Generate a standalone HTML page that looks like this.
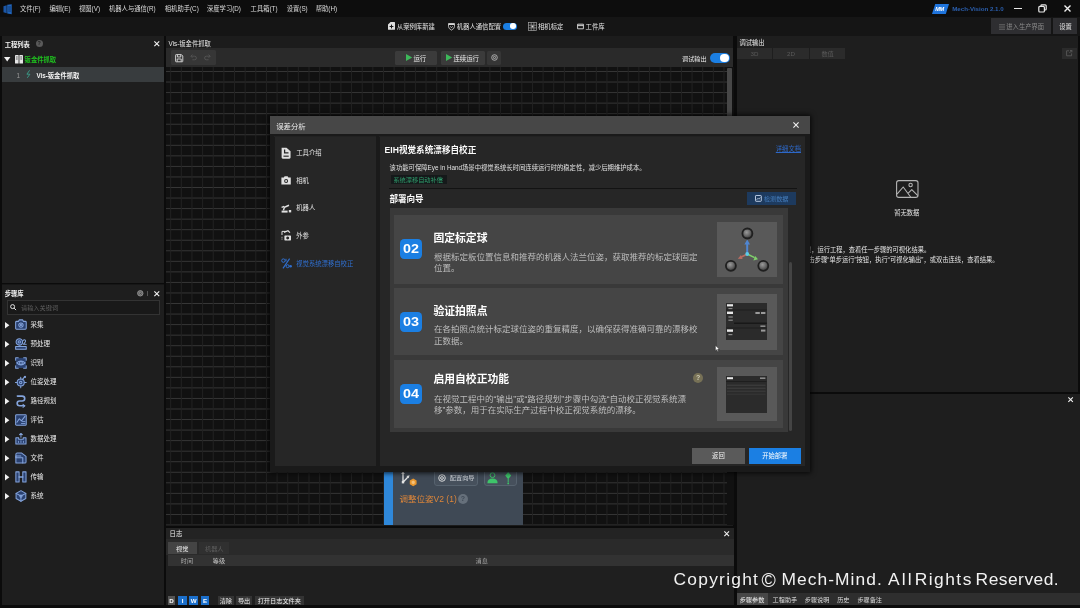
<!DOCTYPE html>
<html lang="zh-CN">
<head>
<meta charset="utf-8">
<title>Mech-Vision</title>
<style>
*{box-sizing:border-box;margin:0;padding:0}
html,body{width:1080px;height:608px;overflow:hidden;background:#0b0b0b}
body{position:relative;will-change:transform;font-family:"Liberation Sans","Noto Sans CJK SC",sans-serif;font-size:6.4px;color:#e6e6e6;line-height:1}
.abs{position:absolute}
.t{position:absolute;white-space:nowrap;line-height:10px;height:10px;margin-top:-4.4px}
.b{font-weight:bold}
svg{position:absolute;overflow:visible}
/* top bars */
#menubar{left:0;top:0;width:1080px;height:17px;background:#0d0d0d}
#toolbar{left:0;top:17px;width:1080px;height:19px;background:#151515}
/* panels */
.panel{background:#1e1e1e}
#pl1{left:2px;top:36px;width:162.4px;height:246.6px}
#pl2{left:2px;top:285px;width:162.4px;height:320px;box-shadow:0 -.6px 0 #1e1e1e}
#pc{left:166px;top:36px;width:567px;height:490px;background:#1c1c1c}
#pctool{left:0;top:12px;width:567px;height:19px;background:#2a2a2a}
#canvas{left:0;top:31px;width:560.6px;height:458px;background-color:#111;
 background-image:linear-gradient(to right,#212121 0,#212121 1px,transparent 1px),linear-gradient(to bottom,#363636 0,#363636 1px,transparent 1px);
 background-size:10.65px 10.55px;background-position:4.2px 4px}
#vscroll{left:560.6px;top:31px;width:7px;height:458px;background:#111}
#vscroll i{position:absolute;left:.9px;top:1.2px;width:4.3px;height:240px;background:#474747;border-radius:1px}
#plog{left:166px;top:527.5px;width:567.6px;height:77.5px;background:linear-gradient(to bottom,#232323 0,#232323 10.5px,#2a2a2a 10.5px,#2a2a2a 27px,#1f1f1f 27px)}
#pr1{left:736.6px;top:35.6px;width:341.2px;height:356.3px}
#pr2{left:736.6px;top:393.6px;width:343.4px;height:211.8px}
/* dialog */
#dlg{left:270px;top:116px;width:540px;height:355.5px;background:#1a1a1a;box-shadow:0 0 5px 1px rgba(0,0,0,.8)}
#dlgtitle{left:0;top:0;width:540px;height:17.8px;background:#474747}
#side{left:4px;top:21px;width:101.8px;height:329px;background:linear-gradient(to right,#1a1a1a 1px,#262626 1px);box-shadow:0 -.8px 0 #252525}
#main{left:109px;top:21px;width:426.2px;height:329.2px;background:linear-gradient(to right,#1a1a1a .8px,#262626 .8px);box-shadow:0 -.8px 0 #252525}
.card{position:absolute;left:3.7px;width:389px;background:#454545}
.badge{position:absolute;left:6px;width:22.2px;height:20.4px;border-radius:4.2px;background:#1b7fe3;color:#fff;font-weight:bold;font-size:12.6px;line-height:20.6px;text-align:center}
.badge b{display:inline-block;transform:scaleX(1.14)}
.ct{position:absolute;left:39.6px;font-size:10.8px;margin-top:.3px;font-weight:bold;color:#fff;line-height:14px;white-space:nowrap}
.cd{position:absolute;left:40px;font-size:8.5px;color:#bdbdbd;line-height:11.1px;white-space:nowrap;margin-top:1.1px}
.thumb{position:absolute;left:323px;width:60px;height:55px;background:#595959}
.btn{position:absolute;text-align:center;white-space:nowrap}
.m{top:8.8px;font-size:6.3px;color:#dcdcdc}
.tb{top:9.5px;font-size:6.35px;color:#e4e4e4}
.tog{border-radius:4px;background:#1b7fe3}
.tog i{position:absolute;border-radius:50%;background:#fff}
.q{border-radius:50%;font-size:5.4px;font-weight:bold;text-align:center;line-height:7px}
.lb{top:68.4px;height:9.2px;background:#1b6fcb;color:#fff;font-weight:bold;font-size:6.2px;line-height:9.2px;text-align:center}
.lg{top:68.4px;height:9.2px;background:#343434;color:#f0f0f0;font-size:6.2px;line-height:9.2px;text-align:center;white-space:nowrap}
.rt{top:12px;width:35.2px;height:11.6px;background:#2b2b2b;color:#5a5a5a;font-size:6.2px;line-height:11.6px;text-align:center}
.bt{top:205.4px;font-size:6.15px;color:#dcdcdc}
#wm{left:0;top:0;z-index:50}
.w{top:579.4px;font-size:17.4px;color:#f2f2f2;line-height:24px;height:24px;margin-top:-12px}
</style>
</head>
<body>
<div id="menubar" class="abs">
  <svg style="left:3.4px;top:3.8px" width="9.2" height="10.6" viewBox="0 0 10 11"><path d="M0.5 2.2 L4 1.2 V9.8 L0.5 8.8Z" fill="#1b56a6"/><path d="M4.6 0.6 L9.5 0 V10.8 L4.6 10.2Z" fill="#2065bd"/><path d="M5.6 3h3M5.6 5.2h3M5.6 7.4h3" stroke="#0d2a55" stroke-width=".8"/></svg>
  <span class="t m" style="left:20px">文件(F)</span>
  <span class="t m" style="left:49.5px">编辑(E)</span>
  <span class="t m" style="left:79px">视图(V)</span>
  <span class="t m" style="left:109px">机器人与通信(R)</span>
  <span class="t m" style="left:164.8px">相机助手(C)</span>
  <span class="t m" style="left:207px">深度学习(D)</span>
  <span class="t m" style="left:250.6px">工具箱(T)</span>
  <span class="t m" style="left:286.7px">设置(S)</span>
  <span class="t m" style="left:315.7px">帮助(H)</span>
  <svg style="left:932px;top:4px" width="17" height="10" viewBox="0 0 17 10"><path d="M3.2 0H17L13.8 10H0Z" fill="#1f74dc"/></svg>
  <span class="t b" style="left:935.2px;top:8.7px;font-size:5.6px;color:#fff;font-style:italic;letter-spacing:-.3px">MM</span>
  <span class="t b" style="left:952.2px;top:8.7px;font-size:6.15px;color:#2b5fae">Mech-Vision 2.1.0</span>
  <div class="abs" style="left:1013.5px;top:7.6px;width:8.5px;height:1.3px;background:#e8e8e8"></div>
  <svg style="left:1037.5px;top:4px" width="9" height="9" viewBox="0 0 9 9" fill="none" stroke="#e8e8e8" stroke-width="1.2"><rect x=".8" y="2.4" width="5.6" height="5.6" rx="1"/><path d="M3 2.2V1.6Q3 .8 3.8 .8H7.2Q8.2 .8 8.2 1.8V5Q8.2 6 7.2 6H6.6"/></svg>
  <svg style="left:1064px;top:5px" width="7" height="7" viewBox="0 0 7 7" stroke="#f0f0f0" stroke-width="1.4"><path d="M.5 .5L6.5 6.5M6.5 .5L.5 6.5"/></svg>
</div>
<div id="toolbar" class="abs">
  <svg style="left:388.2px;top:5.2px" width="7" height="7.8" viewBox="0 0 7 7.8"><path d="M2.6 0H6.4Q7 0 7 .6V7.2Q7 7.8 6.4 7.8H.6Q0 7.8 0 7.2V2.6Z" fill="#dedede"/><path d="M3.5 2.6V6.4M1.6 4.5H5.4" stroke="#151515" stroke-width="1"/></svg>
  <span class="t tb" style="left:396.8px">从案例库新建</span>
  <svg style="left:448.2px;top:5.6px" width="7" height="7.6" viewBox="0 0 7 7.6" fill="none" stroke="#d8d8d8" stroke-width=".8"><path d="M.5 .6H6.5V3.6Q6.5 5.6 3.5 7.1Q.5 5.6 .5 3.6Z"/><path d="M.5 1.2H6.5" stroke-width="1.6"/><path d="M2.2 3.2L3.5 4.8L4.8 3.2" stroke-width=".7"/></svg>
  <span class="t tb" style="left:456.7px">机器人通信配置</span>
  <div class="abs tog" style="left:503px;top:5.6px;width:14px;height:7.4px"><i style="left:7.4px;top:.9px;width:5.6px;height:5.6px"></i></div>
  <svg style="left:528.4px;top:4.8px" width="9" height="9" viewBox="0 0 9 9" fill="none" stroke="#a4a4a4" stroke-width=".7"><rect x=".4" y=".4" width="8.2" height="8.2"/><path d="M3.2 .4V8.6M5.9 .4V8.6M.4 3.2H8.6M.4 5.9H8.6"/><circle cx="4.5" cy="4.5" r="1" fill="#d8d8d8" stroke="none"/></svg>
  <span class="t tb" style="left:538px">相机标定</span>
  <svg style="left:577.3px;top:6px" width="7" height="7" viewBox="0 0 7 7" fill="none" stroke="#e0e0e0" stroke-width=".9"><path d="M.6 1.2H6.4V5.8H.6Z"/><path d="M.6 2.6H6.4"/></svg>
  <span class="t tb" style="left:585.6px">工件库</span>
  <div class="abs" style="left:991.4px;top:1.4px;width:60px;height:15.8px;background:#2e2e31"></div>
  <svg style="left:998.5px;top:6.5px" width="6" height="6" viewBox="0 0 6 6" stroke="#777" stroke-width=".8"><path d="M0 .8H6M0 3H6M0 5.2H6"/></svg>
  <span class="t" style="left:1006.3px;top:9.6px;font-size:6.3px;color:#8a8a8a">进入生产界面</span>
  <div class="abs" style="left:1053.2px;top:1.4px;width:24.2px;height:15.8px;background:#2e2e31"></div>
  <span class="t" style="left:1059.2px;top:9.6px;font-size:6.3px;color:#e8e8e8">设置</span>
</div>
<div id="pl1" class="abs panel">
  <span class="t b" style="left:2.8px;top:8px;font-size:6.25px;color:#f0f0f0">工程列表</span>
  <div class="abs q" style="left:33.7px;top:4px;width:7px;height:7px;background:#5a5a5a;color:#222">?</div>
  <svg style="left:151.6px;top:5.3px" width="5.6" height="5.6" viewBox="0 0 6 6" stroke="#f2f2f2" stroke-width="1.2"><path d="M.4 .4L5.6 5.6M5.6 .4L.4 5.6"/></svg>
  <svg style="left:2.2px;top:20.6px" width="6.4" height="4.4" viewBox="0 0 6.4 4.4"><path d="M0 0H6.4L3.2 4.4Z" fill="#f0f0f0"/></svg>
  <svg style="left:13px;top:18.5px" width="8" height="8.6" viewBox="0 0 8 8.6" fill="#e6e6e6"><rect x="0" y="0" width="3.6" height="8.6" rx=".4"/><rect x="4.4" y="0" width="3.6" height="8.6" rx=".4"/><path d="M.9 2H2.7M.9 4H2.7M5.3 2H7.1M5.3 4H7.1" stroke="#1e1e1e" stroke-width=".7"/></svg>
  <span class="t b" style="left:22.6px;top:23px;font-size:6.3px;color:#1fc11f">钣金件抓取</span>
  <div class="abs" style="left:0;top:30.6px;width:162px;height:15.2px;background:#383c3e"></div>
  <span class="t" style="left:14.6px;top:39.2px;font-size:6.3px;color:#9a9a9a">1</span>
  <svg style="left:23.6px;top:34.4px" width="5" height="8" viewBox="0 0 5 8" fill="none" stroke="#3aa08c" stroke-width=".9"><path d="M3.6 .3L.9 4.2H3.9L1.3 7.8"/></svg>
  <span class="t b" style="left:34.4px;top:39.4px;font-size:6.3px;color:#f2f2f2">Vis-钣金件抓取</span>
</div>
<div id="pl2" class="abs panel">
  <span class="t b" style="left:2.8px;top:8.3px;font-size:6.25px;color:#f0f0f0">步骤库</span>
  <svg style="left:134.6px;top:5px" width="6.6" height="6.6" viewBox="0 0 6.6 6.6" fill="#5c5c5c" stroke="#9a9a9a" stroke-width=".9"><circle cx="3.3" cy="3.3" r="2.7"/><circle cx="3.3" cy="3.3" r="1" fill="#1e1e1e"/></svg>
  <div class="abs" style="left:145.4px;top:6px;width:.8px;height:4.6px;background:#555"></div>
  <svg style="left:151.6px;top:5.5px" width="5.6" height="5.6" viewBox="0 0 6 6" stroke="#f2f2f2" stroke-width="1.2"><path d="M.4 .4L5.6 5.6M5.6 .4L.4 5.6"/></svg>
  <div class="abs" style="left:4.8px;top:15.4px;width:153.2px;height:14.2px;background:#191919;border:.8px solid #333"></div>
  <svg style="left:8.4px;top:19.2px" width="6.4" height="6.4" viewBox="0 0 6.4 6.4" fill="none" stroke="#e2e2e2" stroke-width="1"><circle cx="2.6" cy="2.6" r="2"/><path d="M4.1 4.1L6.1 6.1"/></svg>
  <span class="t" style="left:19px;top:22.6px;font-size:6.2px;color:#5e5e5e">请输入关键词</span>
  <svg style="left:2.6px;top:36.8px" width="4.4" height="6.4" viewBox="0 0 4.4 6.4"><path d="M0 0L4.4 3.2L0 6.4Z" fill="#f0f0f0"/></svg>
  <svg style="left:13.2px;top:33.9px" width="11.9" height="11.9" viewBox="0 0 11 11" fill="none" stroke="#84a4dc" stroke-width=".95" stroke-linejoin="round" stroke-linecap="round"><path d="M.6 3Q.6 2.2 1.4 2.2H3.2L4 .8H7L7.8 2.2H9.6Q10.4 2.2 10.4 3V8.6Q10.4 9.4 9.6 9.4H1.4Q.6 9.4 .6 8.6Z" fill="#2a4170"/><circle cx="5.5" cy="5.6" r="2"/><circle cx="5.5" cy="5.6" r=".6"/></svg>
  <span class="t" style="left:28.5px;top:39.6px;font-size:6.5px;color:#eaeaea">采集</span>
  <svg style="left:2.6px;top:55.8px" width="4.4" height="6.4" viewBox="0 0 4.4 6.4"><path d="M0 0L4.4 3.2L0 6.4Z" fill="#f0f0f0"/></svg>
  <svg style="left:13.2px;top:52.9px" width="11.9" height="11.9" viewBox="0 0 11 11" fill="none" stroke="#84a4dc" stroke-width=".95" stroke-linejoin="round" stroke-linecap="round"><circle cx="4" cy="3.6" r="3" fill="#2a4170"/><circle cx="4" cy="3.6" r="1.1"/><path d="M7.6 2.4Q8.2 1.4 9.2 1.8Q10.4 2.6 9.2 4L7.8 5.8H10.4"/><path d="M.6 7.8H10.4V10.4H.6Z" fill="#2a4170"/></svg>
  <span class="t" style="left:28.5px;top:58.6px;font-size:6.5px;color:#eaeaea">预处理</span>
  <svg style="left:2.6px;top:74.8px" width="4.4" height="6.4" viewBox="0 0 4.4 6.4"><path d="M0 0L4.4 3.2L0 6.4Z" fill="#f0f0f0"/></svg>
  <svg style="left:13.2px;top:72.0px" width="11.9" height="11.9" viewBox="0 0 11 11" fill="none" stroke="#84a4dc" stroke-width=".95" stroke-linejoin="round" stroke-linecap="round"><rect x=".8" y=".8" width="9.4" height="9.4" fill="#2a4170" stroke="none"/><path d="M.6 3V.6H3M8 .6H10.4V3M10.4 8V10.4H8M3 10.4H.6V8"/><path d="M1.6 5.5Q5.5 1.8 9.4 5.5Q5.5 9.2 1.6 5.5Z"/><circle cx="5.5" cy="5.5" r="1.3"/></svg>
  <span class="t" style="left:28.5px;top:77.6px;font-size:6.5px;color:#eaeaea">识别</span>
  <svg style="left:2.6px;top:93.8px" width="4.4" height="6.4" viewBox="0 0 4.4 6.4"><path d="M0 0L4.4 3.2L0 6.4Z" fill="#f0f0f0"/></svg>
  <svg style="left:13.2px;top:91.0px" width="11.9" height="11.9" viewBox="0 0 11 11" fill="none" stroke="#84a4dc" stroke-width=".95" stroke-linejoin="round" stroke-linecap="round"><circle cx="5.3" cy="6" r="3.3" fill="#2a4170"/><circle cx="5.3" cy="6" r="1.1"/><path d="M.4 6H2M8.6 6H10.4M5.3 9.3V10.8M5.3 1.2V2.7M6.8 3.4L9 .6"/><circle cx="9.2" cy=".9" r=".6"/></svg>
  <span class="t" style="left:28.5px;top:96.6px;font-size:6.5px;color:#eaeaea">位姿处理</span>
  <svg style="left:2.6px;top:112.8px" width="4.4" height="6.4" viewBox="0 0 4.4 6.4"><path d="M0 0L4.4 3.2L0 6.4Z" fill="#f0f0f0"/></svg>
  <svg style="left:13.2px;top:110.0px" width="11.9" height="11.9" viewBox="0 0 11 11" fill="none" stroke="#84a4dc" stroke-width=".95" stroke-linejoin="round" stroke-linecap="round"><path d="M2.2 1H6.6Q9 1 9 3.2Q9 5.5 6.6 5.5H4.2Q2 5.5 2 7.7Q2 10 4.2 10H8.8" stroke-width="1.5"/><path d="M7.4 8.6L9 10L7.4 11.4"/></svg>
  <span class="t" style="left:28.5px;top:115.6px;font-size:6.5px;color:#eaeaea">路径规划</span>
  <svg style="left:2.6px;top:131.8px" width="4.4" height="6.4" viewBox="0 0 4.4 6.4"><path d="M0 0L4.4 3.2L0 6.4Z" fill="#f0f0f0"/></svg>
  <svg style="left:13.2px;top:129.0px" width="11.9" height="11.9" viewBox="0 0 11 11" fill="none" stroke="#84a4dc" stroke-width=".95" stroke-linejoin="round" stroke-linecap="round"><rect x=".6" y=".6" width="9.8" height="9.8" rx=".8" fill="#2a4170"/><path d="M1.8 7.6L4 4.4L6 6.4L9.2 2.2"/><path d="M6 8.8H9.2M6.8 7H9.2" stroke-width=".8"/></svg>
  <span class="t" style="left:28.5px;top:134.6px;font-size:6.5px;color:#eaeaea">评估</span>
  <svg style="left:2.6px;top:150.8px" width="4.4" height="6.4" viewBox="0 0 4.4 6.4"><path d="M0 0L4.4 3.2L0 6.4Z" fill="#f0f0f0"/></svg>
  <svg style="left:13.2px;top:148.0px" width="11.9" height="11.9" viewBox="0 0 11 11" fill="none" stroke="#84a4dc" stroke-width=".95" stroke-linejoin="round" stroke-linecap="round"><path d="M.8 4.4H3.4V5.8H7.6V4.4H10.2V10.2H.8Z" fill="#2a4170"/><path d="M3.2 8.8V7.6M5.5 8.8V7.2M7.8 8.8V7.6" stroke-width=".8"/><path d="M5.5 .4V4M4.2 1.6L5.5 .4L6.8 1.6"/></svg>
  <span class="t" style="left:28.5px;top:153.6px;font-size:6.5px;color:#eaeaea">数据处理</span>
  <svg style="left:2.6px;top:169.8px" width="4.4" height="6.4" viewBox="0 0 4.4 6.4"><path d="M0 0L4.4 3.2L0 6.4Z" fill="#f0f0f0"/></svg>
  <svg style="left:13.2px;top:167.0px" width="11.9" height="11.9" viewBox="0 0 11 11" fill="none" stroke="#84a4dc" stroke-width=".95" stroke-linejoin="round" stroke-linecap="round"><path d="M.8 2.2Q.8 1 2 1H6.2L10.2 4V9.2Q10.2 10.2 9.2 10.2H.8Z" fill="#2a4170"/><path d="M.8 5.4H7.2V10.2M.8 5.4V3.6H5.4"/></svg>
  <span class="t" style="left:28.5px;top:172.6px;font-size:6.5px;color:#eaeaea">文件</span>
  <svg style="left:2.6px;top:188.8px" width="4.4" height="6.4" viewBox="0 0 4.4 6.4"><path d="M0 0L4.4 3.2L0 6.4Z" fill="#f0f0f0"/></svg>
  <svg style="left:13.2px;top:186.0px" width="11.9" height="11.9" viewBox="0 0 11 11" fill="none" stroke="#84a4dc" stroke-width=".95" stroke-linejoin="round" stroke-linecap="round"><path d="M.8 .8H3.8V10.2H.8Z" fill="#2a4170"/><path d="M7.2 .8H10.2V10.2H7.2Z" fill="#2a4170"/><path d="M3.8 5.5H7.2" stroke-width="1.4"/></svg>
  <span class="t" style="left:28.5px;top:191.6px;font-size:6.5px;color:#eaeaea">传输</span>
  <svg style="left:2.6px;top:207.8px" width="4.4" height="6.4" viewBox="0 0 4.4 6.4"><path d="M0 0L4.4 3.2L0 6.4Z" fill="#f0f0f0"/></svg>
  <svg style="left:13.2px;top:205.0px" width="11.9" height="11.9" viewBox="0 0 11 11" fill="none" stroke="#84a4dc" stroke-width=".95" stroke-linejoin="round" stroke-linecap="round"><path d="M5.5 .6L10 3.1V7.9L5.5 10.4L1 7.9V3.1Z" fill="#2a4170"/><path d="M1 3.1L5.5 5.6L10 3.1M5.5 5.6V10.4"/><circle cx="5.5" cy="5.6" r="1"/></svg>
  <span class="t" style="left:28.5px;top:210.6px;font-size:6.5px;color:#eaeaea">系统</span>
</div>
<div id="pc" class="abs">
  <span class="t" style="left:2.6px;top:7.3px;font-size:6.3px;color:#e8e8e8">Vis-钣金件抓取</span>
  <div id="pctool" class="abs">
    <div class="abs" style="left:4.6px;top:2.4px;width:45.4px;height:14.4px;background:#363636;border-radius:1.5px"></div>
    <svg style="left:9.4px;top:5.6px" width="8.4" height="8.4" viewBox="0 0 8.4 8.4" fill="none" stroke="#dcdcdc" stroke-width=".9"><path d="M.6 1.2Q.6 .6 1.2 .6H6.4L7.8 2V7.2Q7.8 7.8 7.2 7.8H1.2Q.6 7.8 .6 7.2Z"/><path d="M2.4 .8V3H5.8V.8M2.2 7.6V5H6.2V7.6"/></svg>
    <svg style="left:24.4px;top:6.4px" width="7" height="6.4" viewBox="0 0 7 6.4" fill="none" stroke="#555" stroke-width=".9"><path d="M2.4 .6L.8 2.2L2.4 3.8M.9 2.2H4.6Q6.4 2.2 6.4 4Q6.4 5.8 4.6 5.8H2.4"/></svg>
    <svg style="left:38px;top:6.4px" width="7" height="6.4" viewBox="0 0 7 6.4" fill="none" stroke="#555" stroke-width=".9"><path d="M4.6 .6L6.2 2.2L4.6 3.8M6.1 2.2H2.4Q.6 2.2 .6 4Q.6 5.8 2.4 5.8H4.6"/></svg>
    <div class="abs" style="left:229.4px;top:2.6px;width:42px;height:14px;background:#3b3b3b;border-radius:1.5px"></div>
    <svg style="left:239.6px;top:6.2px" width="6.2" height="7" viewBox="0 0 6.2 7"><path d="M0 0L6.2 3.5L0 7Z" fill="#3db85a"/></svg>
    <span class="t" style="left:247.4px;top:10.5px;font-size:6.4px;color:#ededed">运行</span>
    <div class="abs" style="left:275px;top:2.6px;width:44.4px;height:14px;background:#3b3b3b;border-radius:1.5px"></div>
    <svg style="left:280.2px;top:6.2px" width="6.2" height="7" viewBox="0 0 6.2 7"><path d="M0 0L6.2 3.5L0 7Z" fill="#3db85a"/></svg>
    <span class="t" style="left:287.4px;top:10.5px;font-size:6.4px;color:#ededed">连续运行</span>
    <div class="abs" style="left:321px;top:2.6px;width:14.4px;height:14px;background:#363636;border-radius:1.5px"></div>
    <svg style="left:324.6px;top:6.2px" width="7" height="7" viewBox="0 0 7 7" fill="none" stroke="#bdbdbd" stroke-width=".85"><circle cx="3.5" cy="3.5" r="2.8"/><circle cx="3.5" cy="3.5" r="1.1"/></svg>
    <span class="t" style="left:516px;top:9.9px;font-size:6.2px;color:#e8e8e8">调试输出</span>
    <div class="abs tog" style="left:543.6px;top:4.6px;width:20.4px;height:10.8px;border-radius:5.4px"><i style="left:10.8px;top:1.2px;width:8.4px;height:8.4px"></i></div>
  </div>
  <div id="canvas" class="abs">
    <div class="abs" style="left:218.2px;top:395px;width:139.2px;height:63px;background:#3f4955"></div>
    <div class="abs" style="left:218.2px;top:395px;width:8.4px;height:63px;background:#2f88da"></div>
    <svg style="left:233px;top:404px" width="20" height="16" viewBox="0 0 20 16"><path d="M4 2V11.2L9.2 5.8" fill="none" stroke="#e4e4e4" stroke-width="1.3" stroke-linejoin="round"/><path d="M2.2 3L4 .2L5.8 3Z" fill="#e4e4e4"/><path d="M10.6 4.2L7.4 5L9.6 7.2Z" fill="#e4e4e4"/><rect x="2.8" y="10" width="2.4" height="2.4" fill="#e4e4e4"/><path d="M14.2 7.6L17.6 9.5V13.3L14.2 15.2L10.8 13.3V9.5Z" fill="#e8962e"/><path d="M14.2 9.6L15.8 10.5V12.3L14.2 13.2L12.6 12.3V10.5Z" fill="#f6c27a"/></svg>
    <div class="abs" style="left:267.6px;top:401px;width:44.6px;height:17.8px;background:#46505c;border:.8px solid #56626e;border-radius:3px"></div>
    <svg style="left:272.2px;top:406.6px" width="8" height="8" viewBox="0 0 8 8" fill="none" stroke="#e6e6e6" stroke-width=".9"><circle cx="4" cy="4" r="3.3"/><circle cx="4" cy="4" r="1.4"/></svg>
    <span class="t" style="left:283.8px;top:410.6px;font-size:6.2px;color:#cfd3d8">配置向导</span>
    <div class="abs" style="left:318.4px;top:401px;width:33px;height:17.8px;background:#46505c;border:.8px solid #56626e;border-radius:3px"></div>
    <svg style="left:321.4px;top:405.4px" width="11" height="11.6" viewBox="0 0 11 11.6"><circle cx="5.5" cy="3.2" r="2.4" fill="none" stroke="#3ec46a" stroke-width="1"/><path d="M.4 11.2Q.4 6.6 5.5 6.6Q10.6 6.6 10.6 11.2Z" fill="#3ec46a"/></svg>
    <svg style="left:339.4px;top:404.6px" width="6.4" height="12.4" viewBox="0 0 6.4 12.4"><path d="M3.2 0L6.2 3.6L3.2 7.2L.2 3.6Z" fill="#3ec46a"/><path d="M3.2 7V10.4" stroke="#3ec46a" stroke-width="1"/><circle cx="3.2" cy="11.4" r=".9" fill="#3ec46a"/></svg>
    <span class="t" style="left:233.6px;top:431.7px;font-size:8.5px;color:#dd863a">调整位姿V2 (1)</span>
    <div class="abs q" style="left:292px;top:427px;width:10px;height:10px;background:#66707b;color:#3f4955;font-size:7px;line-height:10px">?</div>
  </div>
  <div id="vscroll" class="abs"><i></i></div>
</div>
<div id="plog" class="abs">
  <span class="t" style="left:3.6px;top:6px;font-size:6.4px;color:#ececec">日志</span>
  <svg style="left:558.4px;top:3px" width="5.4" height="5.4" viewBox="0 0 6 6" stroke="#f2f2f2" stroke-width="1.2"><path d="M.4 .4L5.6 5.6M5.6 .4L.4 5.6"/></svg>
  <div class="abs" style="left:1.8px;top:14.4px;width:29px;height:12.2px;background:#444"></div>
  <span class="t" style="left:10.1px;top:20.7px;font-size:6.2px;color:#f0f0f0">视觉</span>
  <div class="abs" style="left:33px;top:14.4px;width:30.4px;height:12.2px;background:#303030"></div>
  <span class="t" style="left:39px;top:20.7px;font-size:6.2px;color:#5c5c5c">机器人</span>
  <div class="abs" style="left:1.8px;top:27px;width:565.8px;height:11.4px;background:#323232"></div>
  <span class="t" style="left:14.8px;top:32.6px;font-size:6.1px;color:#a8a8a8">时间</span>
  <span class="t" style="left:46.8px;top:32.6px;font-size:6.1px;color:#c8c8c8">等级</span>
  <span class="t" style="left:309.6px;top:32.6px;font-size:6.1px;color:#a8a8a8">消息</span>
  <div class="abs lb" style="left:1.8px;background:#555;width:7.6px">D</div>
  <div class="abs lb" style="left:12.2px;width:8.8px">I</div>
  <div class="abs lb" style="left:23.2px;width:8.8px">W</div>
  <div class="abs lb" style="left:34.6px;width:8.8px">E</div>
  <div class="abs lg" style="left:52.2px;width:15.4px">清除</div>
  <div class="abs lg" style="left:70.4px;width:15.4px">导出</div>
  <div class="abs lg" style="left:89px;width:48.6px">打开日志文件夹</div>
</div>
<div id="pr1" class="abs panel">
  <span class="t" style="left:2.8px;top:6.6px;font-size:6.25px;color:#ececec">调试输出</span>
  <div class="abs rt" style="left:0.4px">3D</div>
  <div class="abs rt" style="left:36.8px">2D</div>
  <div class="abs rt" style="left:73.4px">数值</div>
  <div class="abs" style="left:325.8px;top:12px;width:14.4px;height:11.8px;background:#2b2b2b"></div>
  <svg style="left:329.8px;top:14.8px" width="6.4" height="6.4" viewBox="0 0 6.4 6.4" fill="none" stroke="#5e5e5e" stroke-width=".8"><path d="M3 .8H.6V5.8H5.6V3.4M3.4 3L5.8 .6M4 .5H5.9V2.4"/></svg>
  <svg style="left:159.2px;top:144.4px" width="22.6" height="18" viewBox="0 0 22.6 18" fill="none" stroke="#b4b4b4" stroke-width="1.1" stroke-linejoin="round"><rect x=".6" y=".6" width="21.4" height="16.8" rx="2.2"/><circle cx="14.6" cy="5" r="1.7"/><path d="M1 14.2L7.2 7L14.6 17M12 13.4L15.8 9.6L21.8 15.6"/></svg>
  <span class="t" style="left:157.6px;top:176.4px;font-size:6.3px;color:#e2e2e2">暂无数据</span>
  <span class="t" style="right:147.6px;top:214px;font-size:6.28px;color:#e6e6e6">1. 点击“运行”按钮，运行工程，查看任一步骤的可视化结果。</span>
  <span class="t" style="right:79.2px;top:223.4px;font-size:6.28px;color:#e6e6e6">2. 点击步骤“单步运行”按钮，执行“可视化输出”，或双击连线，查看结果。</span>
</div>
<div id="pr2" class="abs panel">
  <svg style="left:331px;top:3px" width="5.2" height="5.2" viewBox="0 0 6 6" stroke="#f2f2f2" stroke-width="1.3"><path d="M.4 .4L5.6 5.6M5.6 .4L.4 5.6"/></svg>
  <div class="abs" style="left:0;top:199px;width:343px;height:12.4px;background:#2e2e2e"></div>
  <div class="abs" style="left:0;top:199px;width:31px;height:12.4px;background:#474747"></div>
  <span class="t bt" style="left:3.2px;color:#f4f4f4">步骤参数</span>
  <span class="t bt" style="left:36px">工程助手</span>
  <span class="t bt" style="left:68.2px">步骤说明</span>
  <span class="t bt" style="left:100.6px">历史</span>
  <span class="t bt" style="left:120.8px">步骤备注</span>
</div>
<div id="dlg" class="abs">
  <div id="dlgtitle" class="abs">
    <span class="t" style="left:6.2px;top:10.1px;font-size:7.4px;color:#ececec">误差分析</span>
    <svg style="left:523.4px;top:5.6px" width="6" height="6" viewBox="0 0 6 6" stroke="#f2f2f2" stroke-width="1.1"><path d="M.4 .4L5.6 5.6M5.6 .4L.4 5.6"/></svg>
  </div>
  <div id="side" class="abs">
    <svg style="left:6.2px;top:9.7px" width="12.2" height="12.4" viewBox="0 0 10.6 10.8"><path d="M1.4 .6H5.6L9.2 3.8V9.2Q9.2 10.2 8.2 10.2H2.4Q1.4 10.2 1.4 9.2Z" fill="#e0e0e0"/><path d="M4 2.2V5.2H7.4" fill="none" stroke="#262626" stroke-width="1.1"/><path d="M3 8H7.6" stroke="#262626" stroke-width="1"/></svg>
    <span class="t" style="left:22.2px;top:15.6px;font-size:6.35px;color:#e6e6e6">工具介绍</span>
    <svg style="left:7px;top:38.1px" width="10.6" height="10.8" viewBox="0 0 10.6 10.8"><path d="M.4 2.6H2.8L3.6 1.2H6.6L7.4 2.6H9.8V9.4H.4Z" fill="#e0e0e0"/><circle cx="5.1" cy="5.9" r="2" fill="#262626"/><circle cx="5.1" cy="5.9" r="1" fill="#e0e0e0"/></svg>
    <span class="t" style="left:22.2px;top:43.2px;font-size:6.35px;color:#e6e6e6">相机</span>
    <svg style="left:7px;top:65.7px" width="10.6" height="10.8" viewBox="0 0 10.6 10.8"><path d="M.6 9.6H6.6V7.6H.6Z" fill="#e0e0e0"/><path d="M2.4 7.4L3.4 4.2L8 2.2" fill="none" stroke="#e0e0e0" stroke-width="1.5"/><rect x="7.8" y="7" width="2.4" height="2.4" fill="#e0e0e0"/><path d="M.6 4.4L3.2 3.4" stroke="#e0e0e0" stroke-width="1.2"/></svg>
    <span class="t" style="left:22.2px;top:70.8px;font-size:6.35px;color:#e6e6e6">机器人</span>
    <svg style="left:7px;top:93.3px" width="10.6" height="10.8" viewBox="0 0 10.6 10.8"><path d="M1 1.4H5.4M1 1.4V5" fill="none" stroke="#e0e0e0" stroke-width="1"/><path d="M3 2.4L7 .8L9 2.6" fill="none" stroke="#e0e0e0" stroke-width="1.2"/><rect x="3.4" y="5.4" width="6.6" height="5" rx=".6" fill="#e0e0e0"/><circle cx="6.7" cy="8" r="1.5" fill="#262626"/><path d="M1 6.8V10.4" stroke="#e0e0e0" stroke-width=".8" stroke-dasharray="1 .8"/></svg>
    <span class="t" style="left:22.2px;top:98.4px;font-size:6.35px;color:#e6e6e6">外参</span>
    <svg style="left:7px;top:120.9px" width="10.6" height="10.8" viewBox="0 0 10.6 10.8"><path d="M8.6 .6L2 10.4" stroke="#2f6fd0" stroke-width="1.1"/><circle cx="2.4" cy="2.6" r="1.7" fill="none" stroke="#2f6fd0" stroke-width="1"/><path d="M5 .8V3.4" stroke="#2f6fd0" stroke-width="1"/><circle cx="6.6" cy="8.2" r="1.5" fill="none" stroke="#2f6fd0" stroke-width="1"/><circle cx="9.6" cy="8.2" r="1.3" fill="#2f6fd0"/></svg>
    <span class="t" style="left:22.2px;top:126.0px;font-size:6.35px;color:#2f6fd0">视觉系统漂移自校正</span>
  </div>
  <div id="main" class="abs">
    <span class="t b" style="left:5.6px;top:12.1px;font-size:8.6px;color:#fafafa">EIH视觉系统漂移自校正</span>
    <span class="t" style="left:396.8px;top:11.4px;font-size:6.3px;color:#2d68c8;text-decoration:underline">详细文档</span>
    <span class="t" style="left:10.6px;top:30.2px;font-size:6.34px;color:#e2e2e2">该功能可保障Eye in Hand场景中视觉系统长时间连续运行时的稳定性，减少后期维护成本。</span>
    <div class="abs" style="left:11.6px;top:38.4px;width:56.4px;height:8.8px;background:#15191a"></div>
    <span class="t" style="left:14.4px;top:42.3px;font-size:6.2px;color:#2f9d6c">系统漂移自动补偿</span>
    <div class="abs" style="left:10px;top:50.6px;width:408px;height:1px;background:#131313"></div>
    <span class="t b" style="left:10.4px;top:61.3px;font-size:8.55px;color:#fafafa">部署向导</span>
    <div class="abs" style="left:367.8px;top:55.4px;width:49.2px;height:12.4px;background:#1d3a5e"></div>
    <svg style="left:375.8px;top:58.2px" width="6.8" height="6.8" viewBox="0 0 6.8 6.8" fill="none" stroke="#c8d8ee" stroke-width=".9"><rect x=".5" y=".5" width="5.8" height="5.8" rx=".6"/><path d="M1.4 5.2L3 3.2L4 4.2L5.4 2.4" stroke-width=".7"/></svg>
    <span class="t" style="left:385px;top:61.6px;font-size:6.1px;color:#467fbf">检测数据</span>
    <div class="abs" id="cards" style="left:11.2px;top:71.4px;width:398.2px;height:223.6px;background:#393939">
    <div class="card" style="top:6.6px;height:68.8px">
      <div class="badge" style="top:23.6px"><b>02</b></div>
      <div class="ct" style="top:15.6px">固定标定球</div>
      <div class="cd" style="top:36.2px">根据标定板位置信息和推荐的机器人法兰位姿，获取推荐的标定球固定<br>位置。</div>
      <div class="thumb" style="top:6.6px">
        <svg style="left:0;top:0" width="60" height="55" viewBox="0 0 60 55">
          <defs><radialGradient id="bg" cx=".42" cy=".38" r=".6"><stop offset="0" stop-color="#9a9a9a"/><stop offset=".55" stop-color="#6a6a6a"/><stop offset="1" stop-color="#3c3c3c"/></radialGradient></defs>
          <path d="M30.2 32V21" stroke="#4f86d2" stroke-width="2"/><path d="M27.4 22.4L30.2 17.6L33 22.4Z" fill="#4f86d2"/>
          <path d="M30.2 32L24 35.2" stroke="#b86c62" stroke-width="1.6"/><path d="M20.8 36.8L24 33L25.6 37Z" fill="#b86c62"/>
          <path d="M30.2 32L37.6 35.6" stroke="#7fd06c" stroke-width="1.5"/><path d="M41 37.2L36.4 38.4L38.2 34Z" fill="#7fd06c"/>
          <circle cx="30.2" cy="32" r="1.9" fill="#5ccbea"/>
          <circle cx="30.4" cy="11.5" r="5" fill="url(#bg)" stroke="#1f1f1f" stroke-width="1.8"/>
          <circle cx="13.9" cy="43.8" r="5" fill="url(#bg)" stroke="#1f1f1f" stroke-width="1.8"/>
          <circle cx="46.3" cy="43.8" r="5" fill="url(#bg)" stroke="#1f1f1f" stroke-width="1.8"/>
        </svg>
      </div>
    </div>
    <div class="card" style="top:79.4px;height:66.8px">
      <div class="badge" style="top:24px"><b>03</b></div>
      <div class="ct" style="top:15.8px">验证拍照点</div>
      <div class="cd" style="top:35.6px">在各拍照点统计标定球位姿的重复精度，以确保获得准确可靠的漂移校<br>正数据。</div>
      <div class="thumb" style="top:6px;height:56px">
        <div class="abs" style="left:9.6px;top:9.4px;width:40.8px;height:37px;background:#2b2b2b"></div>
        <svg style="left:9.6px;top:9.4px" width="40.8" height="37" viewBox="0 0 40.8 37">
          <rect x="1" y="1.2" width="6" height="2.2" fill="#e8e8e8"/><rect x="1" y="8.6" width="6" height="2.4" fill="#e8e8e8"/><rect x="1" y="26.4" width="6" height="2.4" fill="#e8e8e8"/>
          <rect x="2.4" y="5" width="4" height="1.2" fill="#8a8a8a"/><rect x="2.4" y="13.4" width="4.4" height="1.2" fill="#8a8a8a"/><rect x="2.4" y="16.6" width="4.4" height="1.2" fill="#8a8a8a"/><rect x="2.4" y="31" width="4" height="1.2" fill="#8a8a8a"/>
          <rect x="29.4" y="9" width="4.4" height="2" fill="#9a9a9a"/><rect x="35" y="9" width="4.4" height="2" fill="#9a9a9a"/><rect x="34.4" y="22.4" width="5" height="1.6" fill="#8a8a8a"/><rect x="35" y="26.6" width="4.4" height="2" fill="#9a9a9a"/>
          <rect x="0" y="6.6" width="40.8" height=".8" fill="#1c1c1c"/><rect x="8" y="19.6" width="32.8" height="1.2" fill="#141414"/><rect x="0" y="24.6" width="40.8" height=".8" fill="#1c1c1c"/>
        </svg>
      </div>
    </div>
    <div class="card" style="top:151.8px;height:67.6px">
      <div class="badge" style="top:23.4px"><b>04</b></div>
      <div class="ct" style="top:12px">启用自校正功能</div>
      <div class="cd" style="top:33px">在视觉工程中的“输出”或“路径规划”步骤中勾选“自动校正视觉系统漂<br>移”参数，用于在实际生产过程中校正视觉系统的漂移。</div>
      <div class="abs q" style="left:299.2px;top:12.6px;width:10px;height:10px;background:#777156;color:#d0ccb6;font-size:7px;line-height:10px">?</div><div class="thumb" style="top:6.6px;height:54.4px">
        <div class="abs" style="left:9.6px;top:9.2px;width:40.6px;height:37.4px;background:#2b2b2b"></div>
        <svg style="left:9.6px;top:9.2px" width="40.6" height="37.4" viewBox="0 0 40.6 37.4">
          <rect x="1" y="1.2" width="6" height="2" fill="#e8e8e8"/><rect x="34" y="1.4" width="5.4" height="1.6" fill="#8a8a8a"/>
          <rect x="0" y="5" width="40.6" height=".8" fill="#1c1c1c"/>
          <rect x="1" y="8.8" width="38.6" height=".7" fill="#4a4a4a"/><rect x="1" y="11.8" width="38.6" height=".7" fill="#4a4a4a"/><rect x="1" y="14.8" width="38.6" height=".7" fill="#444"/><rect x="1" y="17.8" width="38.6" height=".7" fill="#3c3c3c"/>
        </svg>
      </div>
    </div>
    </div>
    <div class="abs" style="left:410.2px;top:125px;width:3.2px;height:169px;background:#444;border-radius:1.6px"></div>
    <div class="btn" style="left:313.2px;top:310.8px;width:52.4px;height:16px;background:#5a5a5a;color:#f0f0f0;font-size:6.3px;line-height:16px">返回</div>
    <div class="btn" style="left:369.6px;top:310.8px;width:52.4px;height:16px;background:#1b7fe3;color:#fff;font-size:6.3px;line-height:16px">开始部署</div>
  </div>
</div>
<div id="wm" class="abs"><span class="t w" style="left:673.5px;letter-spacing:1.25px">Copyright</span><span class="t w" style="left:761.6px;font-size:19.4px;top:579.7px">©</span><span class="t w" style="left:781.4px;letter-spacing:1.06px">Mech-Mind.</span><span class="t w" style="left:888px;letter-spacing:2.2px">All</span><span class="t w" style="left:914.8px;letter-spacing:1.45px">Rights</span><span class="t w" style="left:975.6px;letter-spacing:.48px">Reserved.</span></div>
<svg style="left:715px;top:345.2px;z-index:60" width="5.2" height="7.4" viewBox="0 0 7 10"><path d="M.5 .5V8L2.4 6.3L3.7 9.3L4.9 8.8L3.6 5.9H6.1Z" fill="#fff" stroke="#111" stroke-width=".6"/></svg>
</body>
</html>
